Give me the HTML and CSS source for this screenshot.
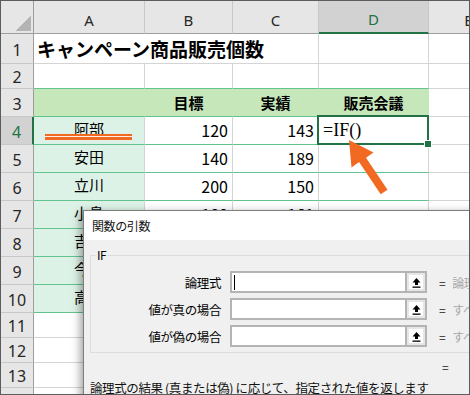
FILE: index.html
```html
<!DOCTYPE html>
<html lang="ja">
<head>
<meta charset="utf-8">
<title>関数の引数</title>
<link rel="stylesheet" href="styles.css">
</head>
<body>
<div class="frame">
  <div class="sheet">
    <div class="corner"><span class="tri"></span></div>
    <div class="ch">A</div><div class="ch">B</div><div class="ch">C</div><div class="ch sel">D</div><div class="ch">E</div>

    <div class="rh">1</div><div class="c title">キャンペーン商品販売個数</div><div class="c"></div><div class="c"></div>

    <div class="rh">2</div><div class="c g"></div><div class="c g"></div><div class="c g"></div><div class="c g"></div><div class="c"></div>

    <div class="rh">3</div><div class="c g hd"></div><div class="c g hd">目標</div><div class="c g hd">実績</div><div class="c g hd">販売会議</div><div class="c"></div>

    <div class="rh sel">4</div><div class="c g nm">阿部</div><div class="c g num">120</div><div class="c g num">143</div><div class="c g act"><span class="formula">=IF()</span></div><div class="c"></div>
    <div class="rh">5</div><div class="c g nm">安田</div><div class="c g num">140</div><div class="c g num">189</div><div class="c g"></div><div class="c"></div>
    <div class="rh">6</div><div class="c g nm">立川</div><div class="c g num">200</div><div class="c g num">150</div><div class="c g"></div><div class="c"></div>
    <div class="rh">7</div><div class="c g nm">小島</div><div class="c g num">180</div><div class="c g num">161</div><div class="c g"></div><div class="c"></div>
    <div class="rh">8</div><div class="c g nm">吉田</div><div class="c g num">160</div><div class="c g num">158</div><div class="c g"></div><div class="c"></div>
    <div class="rh">9</div><div class="c g nm">今井</div><div class="c g num">130</div><div class="c g num">124</div><div class="c g"></div><div class="c"></div>
    <div class="rh">10</div><div class="c g nm">高橋</div><div class="c g num">150</div><div class="c g num">172</div><div class="c g"></div><div class="c"></div>

    <div class="rh">11</div><div class="c"></div><div class="c"></div><div class="c"></div><div class="c"></div><div class="c"></div>
    <div class="rh">12</div><div class="c"></div><div class="c"></div><div class="c"></div><div class="c"></div><div class="c"></div>
    <div class="rh">13</div><div class="c"></div><div class="c"></div><div class="c"></div><div class="c"></div><div class="c"></div>
    <div class="rh">14</div><div class="c"></div><div class="c"></div><div class="c"></div><div class="c"></div><div class="c"></div>
  </div>

  <div class="underline"></div>

  <svg class="arrow" viewBox="341 131 60 70" width="60" height="70">
    <polygon points="349,140 373.5,152.5 366,157.7 387.5,189.8 380.7,194.3 359.1,162.1 351.5,167.5" fill="#f26a22"/>
  </svg>

  <div class="dialog">
    <div class="dlg-title">関数の引数</div>
    <div class="dlg-body">
      <fieldset class="group">
        <legend>IF</legend>
        <div class="args">
          <span class="lbl">論理式</span>
          <div class="inp"><span class="field"><span class="caret"></span></span><span class="ref"><span class="ref-in"><svg viewBox="0 0 11 11" width="11" height="11"><path d="M5.5 1 L9.5 5.5 H7 V8 H4 V5.5 H1.5 Z" fill="#000"/><rect x="1.5" y="9.5" width="8" height="1.3" fill="#000"/></svg></span></span></div>
          <span class="eq">=</span>
          <span class="hint">論理値</span>

          <span class="lbl">値が真の場合</span>
          <div class="inp"><span class="field"></span><span class="ref"><span class="ref-in"><svg viewBox="0 0 11 11" width="11" height="11"><path d="M5.5 1 L9.5 5.5 H7 V8 H4 V5.5 H1.5 Z" fill="#000"/><rect x="1.5" y="9.5" width="8" height="1.3" fill="#000"/></svg></span></span></div>
          <span class="eq">=</span>
          <span class="hint">すべて</span>

          <span class="lbl">値が偽の場合</span>
          <div class="inp"><span class="field"></span><span class="ref"><span class="ref-in"><svg viewBox="0 0 11 11" width="11" height="11"><path d="M5.5 1 L9.5 5.5 H7 V8 H4 V5.5 H1.5 Z" fill="#000"/><rect x="1.5" y="9.5" width="8" height="1.3" fill="#000"/></svg></span></span></div>
          <span class="eq">=</span>
          <span class="hint">すべて</span>
        </div>
      </fieldset>
      <div class="result"><span class="eq">=</span></div>
      <p class="desc">論理式の結果 (真または偽) に応じて、指定された値を返します</p>
    </div>
  </div>
</div>
</body>
</html>
```

FILE: styles.css
```css
* {
  box-sizing: border-box;
  margin: 0;
  padding: 0;
}

body {
  margin: 0;
  background: #fff;
  font-family: "Noto Sans CJK JP", "Noto Sans", sans-serif;
  color: #000;
}

.frame {
  position: relative;
  width: 470px;
  height: 395px;
  border: 1px solid #5c5c5c;
  overflow: hidden;
  background: #fff;
}

.sheet {
  display: grid;
  grid-template-columns: 33px 111px 88px 86px 110px 80px;
  grid-template-rows: 33px 30px 25px 28px 28px 28px 28px 28px 28px 28px 28px 25px 25px 25px 25px;
  width: 508px;
}

.corner {
  background: #e6e6e6;
  border-right: 1px solid #9e9e9e;
  border-bottom: 1px solid #9e9e9e;
  display: flex;
  justify-content: flex-end;
  align-items: flex-end;
  padding: 0 2px 2px 0;
}

.tri {
  width: 16px;
  height: 16px;
  background: linear-gradient(to bottom right, transparent 50%, #b4b4b4 50%);
}

.ch {
  background: #e6e6e6;
  border-right: 1px solid #c8c8c8;
  border-bottom: 1px solid #9e9e9e;
  font-family: "Noto Sans", sans-serif;
  font-size: 15px;
  color: #262626;
  display: flex;
  align-items: center;
  justify-content: center;
  padding-top: 5px;
}

.ch.sel {
  background: #d2d2d2;
  color: #217346;
  border-bottom: 2px solid #217346;
}

.rh {
  background: #e6e6e6;
  border-right: 1px solid #9e9e9e;
  border-bottom: 1px solid #c8c8c8;
  font-family: "Noto Sans", sans-serif;
  font-size: 16px;
  color: #262626;
  display: flex;
  align-items: center;
  justify-content: center;
  padding-top: 2px;
}

.rh.sel {
  background: #d2d2d2;
  color: #217346;
  border-right: 2px solid #217346;
}

.c {
  border-right: 1px solid #d4d4d4;
  border-bottom: 1px solid #d4d4d4;
  background: #fff;
  display: flex;
  align-items: center;
  white-space: nowrap;
}

.title {
  grid-column: span 3;
  font-size: 19px;
  font-weight: bold;
  padding-left: 3px;
}

.g {
  border-bottom-color: #63c38f;
}

.hd {
  background: #c6e7ba;
  border-right-color: #c6e7ba;
  justify-content: center;
  font-size: 15px;
  font-weight: bold;
}

.nm {
  background: #ddf2e6;
  justify-content: center;
  font-size: 15px;
  padding-bottom: 5px;
}

.num {
  justify-content: flex-end;
  padding-right: 4px;
  padding-bottom: 2px;
  font-size: 16px;
}

.act {
  position: relative;
  padding-left: 4px;
}

.act::after {
  content: "";
  position: absolute;
  left: -2px;
  top: -2px;
  right: -1px;
  bottom: -1px;
  border: 2px solid #217346;
}

.act::before {
  content: "";
  position: absolute;
  right: -4px;
  bottom: -4px;
  width: 6px;
  height: 6px;
  background: #217346;
  border: 1px solid #fff;
  z-index: 2;
}

.formula {
  font-family: "Liberation Serif", serif;
  font-size: 18px;
}

.underline {
  position: absolute;
  left: 44px;
  top: 133px;
  width: 87px;
  height: 6px;
  border-top: 2px solid #f26a22;
  border-bottom: 3px solid #f26a22;
  background: #fbeee6;
}

.arrow {
  position: absolute;
  left: 340px;
  top: 130px;
}

.dialog {
  position: absolute;
  left: 82px;
  top: 209px;
  width: 420px;
  height: 200px;
  border-left: 1px solid #7d7d7d;
  border-top: 1px solid #7d7d7d;
  background: #f0f0f0;
  box-shadow: -3px 2px 8px rgba(0, 0, 0, 0.35);
  font-size: 12px;
  letter-spacing: -0.4px;
}

.dlg-title {
  height: 29px;
  background: #fff;
  padding-left: 8px;
  display: flex;
  align-items: center;
  color: #111;
}

.dlg-body {
  padding: 8px 0 0 6px;
}

.group {
  width: 400px;
  border: 1px solid #dcdcdc;
  padding: 0 0 5px 0;
  margin: 0;
}

.group legend {
  margin-left: 5px;
  padding: 0 1px;
  font-size: 12px;
  line-height: 14px;
}

.args {
  display: grid;
  grid-template-columns: 130px 197px auto 1fr;
  column-gap: 9px;
  row-gap: 5px;
  margin-top: 9px;
  align-items: center;
}

.lbl {
  text-align: right;
  white-space: nowrap;
  font-size: 12.5px;
}

.inp {
  height: 22px;
  display: flex;
  border: 2px solid #b4b4b4;
  background: #fff;
}

.field {
  flex: 1;
  display: flex;
  align-items: center;
  padding-left: 2px;
}

.caret {
  width: 1px;
  height: 15px;
  background: #000;
}

.ref {
  width: 20px;
  border-left: 2px solid #b4b4b4;
  background: #e6e6e6;
  display: flex;
  align-items: center;
  justify-content: center;
}

.ref-in {
  width: 14px;
  height: 14px;
  background: #fff;
  display: flex;
  align-items: center;
  justify-content: center;
}

.ref-in svg {
  display: block;
}

.eq {
  margin-left: 3px;
  color: #222;
}

.hint {
  margin-left: -2px;
  color: #a8a8a8;
  white-space: nowrap;
}

.result {
  padding-left: 349px;
  margin-top: 6px;
  line-height: 16px;
}

.desc {
  margin-top: 5px;
  white-space: nowrap;
  line-height: 16px;
  color: #111;
  font-size: 12.5px;
}
```
